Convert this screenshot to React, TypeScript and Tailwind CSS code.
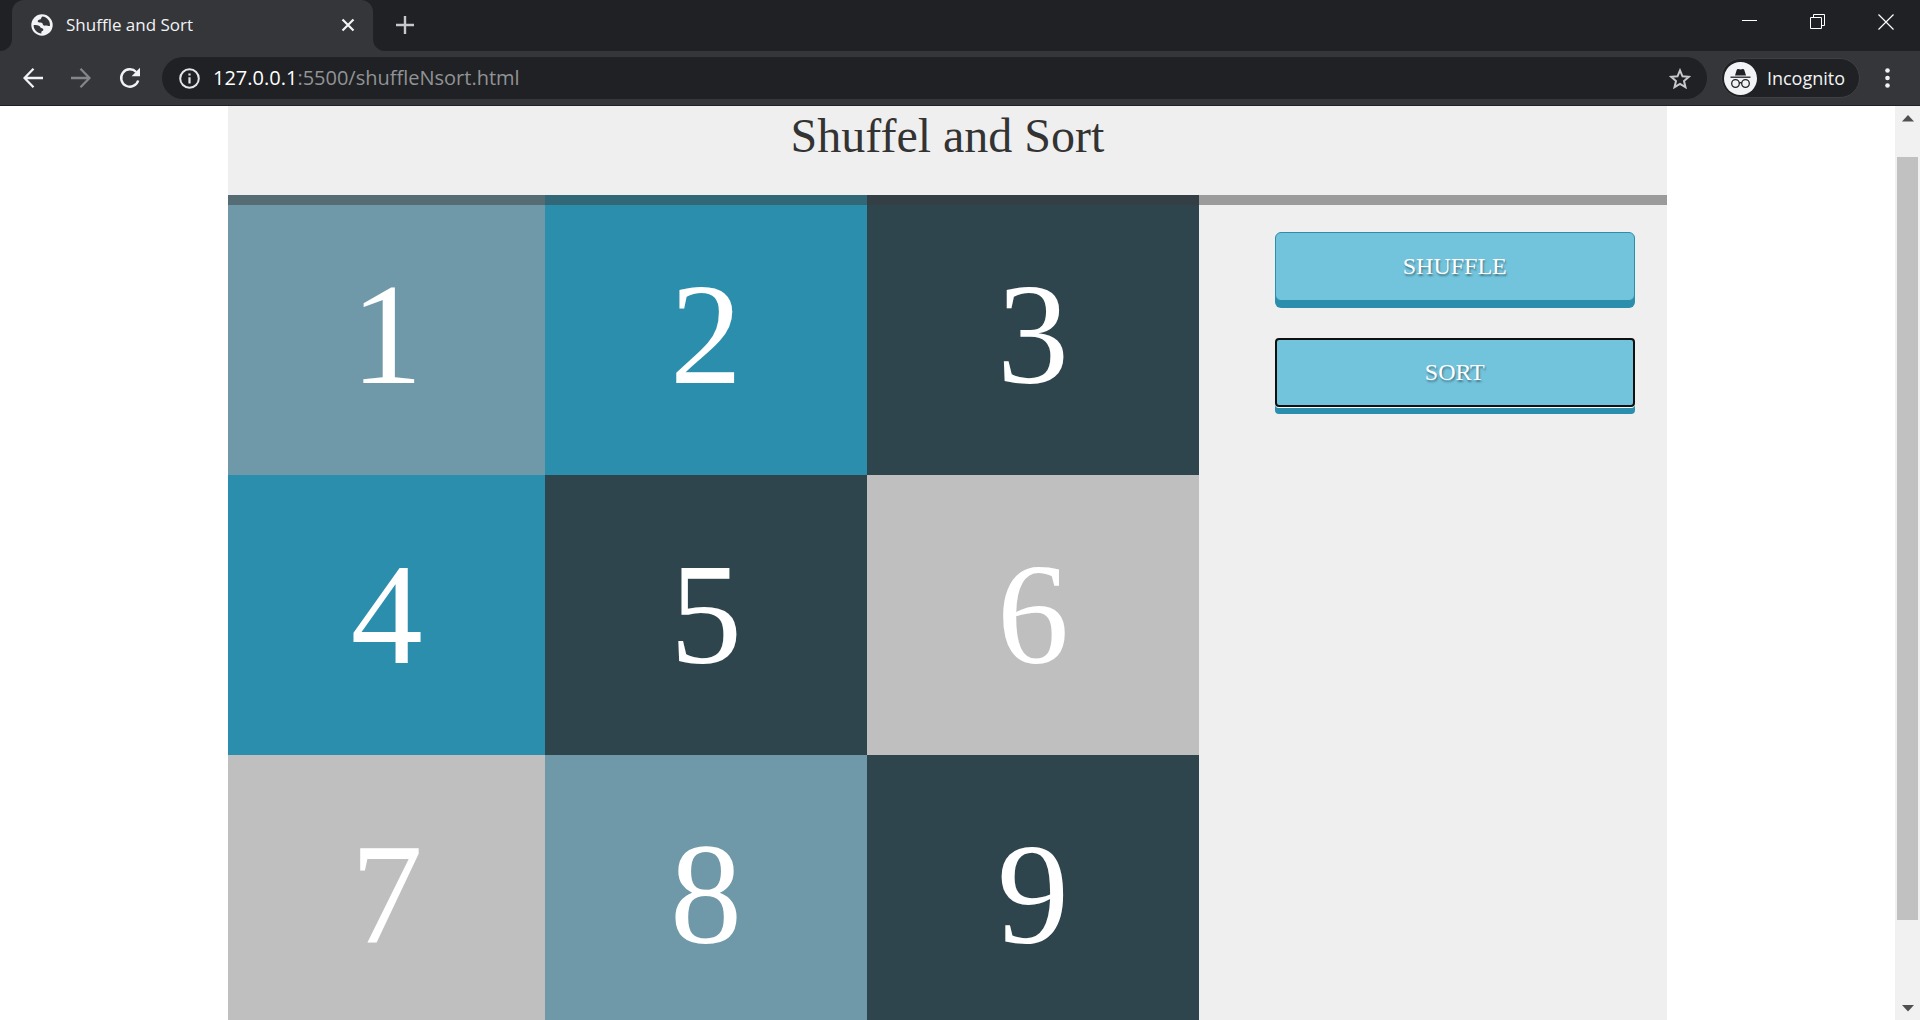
import React from "react";

const tiles = [
  { n: 1, color: "bg-[#6f98a8]" },
  { n: 2, color: "bg-[#2b8ead]" },
  { n: 3, color: "bg-[#2f454e]" },
  { n: 4, color: "bg-[#2b8ead]" },
  { n: 5, color: "bg-[#2f454e]" },
  { n: 6, color: "bg-[#bfbfbf]" },
  { n: 7, color: "bg-[#bfbfbf]" },
  { n: 8, color: "bg-[#6f98a8]" },
  { n: 9, color: "bg-[#2f454e]" },
];

function Globe() {
  return (
    <svg width="22" height="22" viewBox="0 0 22 22" aria-hidden="true">
      <circle cx="11" cy="11" r="10.7" fill="#f1f3f4" />
      <path
        d="M11.3 2.6C9.9 3.4 10.6 4.6 9.6 5.2 8.4 5.8 6.6 5.7 6.7 7.2c.1 1.200 1.500 1.300 2.700 1.300 1.600 0 2.300.8 2.500 2.100.2 1.200 1.500 1.100 2.700 1 1.400-.1 2.500.6 4.300.5C19.600 7.500 16.300 2.900 11.300 2.600z"
        fill="#35363a"
      />
      <path
        d="M2.600 11.200c1.700-.3 3.900-.1 5.300.5 1.400.6 1.100 1.900 2.300 2.200 1.400.3 2.400.7 2.100 2-.3 1.100-1.900 1-2 2.200 0 .5.100.900.200 1.300C6.300 19.300 2.700 15.700 2.600 11.200z"
        fill="#35363a"
      />
    </svg>
  );
}

function TabStrip() {
  return (
    <div className="flex h-[51px] shrink-0 items-stretch bg-[#202124]">
      <div className="w-3 bg-[#35363a]">
        <div className="h-full rounded-br-[12px] bg-[#202124]" />
      </div>
      <div className="flex w-[361px] items-center rounded-t-[12px] bg-[#35363a] pr-[18px] pb-[2px] pl-[19px]">
        <Globe />
        <span className="ml-[13px] flex-1 text-[17px] leading-6 text-[#f1f3f4]">Shuffle and Sort</span>
        <button type="button" aria-label="Close tab" className="flex">
          <svg width="14" height="14" viewBox="0 0 14 14" stroke="#f1f3f4" strokeWidth="2.2" aria-hidden="true">
            <path d="M1.500 1.500l11 11M12.500 1.500l-11 11" />
          </svg>
        </button>
      </div>
      <div className="w-3 bg-[#35363a]">
        <div className="h-full rounded-bl-[12px] bg-[#202124]" />
      </div>
      <button type="button" aria-label="New tab" className="ml-[11px] flex items-center pb-[2px]">
        <svg width="18" height="18" viewBox="0 0 18 18" stroke="#c6c8cb" strokeWidth="2.4" aria-hidden="true">
          <path d="M9 0v18M0 9h18" />
        </svg>
      </button>
      <div className="ml-auto flex h-11 items-center gap-[52px] pr-[26px]">
        <button type="button" aria-label="Minimize" className="flex">
          <svg width="16" height="16" viewBox="0 0 16 16" stroke="#fff" aria-hidden="true">
            <path d="M0 6.500h15" />
          </svg>
        </button>
        <button type="button" aria-label="Restore" className="flex">
          <svg width="16" height="16" viewBox="0 0 16 16" fill="none" stroke="#fff" aria-hidden="true">
            <path d="M.5 3.500h11v11H.5zM3.500 3.500v-3h11v11h-3" />
          </svg>
        </button>
        <button type="button" aria-label="Close window" className="flex">
          <svg width="16" height="16" viewBox="0 0 16 16" stroke="#fff" strokeWidth="1.200" aria-hidden="true">
            <path d="M.5.5l15 15M15.500.5l-15 15" />
          </svg>
        </button>
      </div>
    </div>
  );
}

function Toolbar() {
  return (
    <div className="flex h-[55px] shrink-0 items-center border-b border-[#202124] bg-[#35363a] pr-[30px] pl-[23px]">
      <button type="button" aria-label="Back" className="flex">
        <svg width="20" height="20" viewBox="0 0 20 20" fill="none" stroke="#f1f3f4" strokeWidth="2.300" aria-hidden="true">
          <path d="M20 10H1.500M10.500.800L1.500 10l9 9.200" />
        </svg>
      </button>
      <button type="button" aria-label="Forward" className="ml-7 flex">
        <svg width="20" height="20" viewBox="0 0 20 20" fill="none" stroke="#85868a" strokeWidth="2.300" aria-hidden="true">
          <path d="M0 10h18.500M9.500.800l9 9.200-9 9.200" />
        </svg>
      </button>
      <button type="button" aria-label="Reload" className="ml-7 flex">
        <svg width="22" height="22" viewBox="0 0 22 22" fill="none" aria-hidden="true">
          <path d="M19.200 13.500A8.700 8.700 0 1 1 17.200 5" stroke="#f1f3f4" strokeWidth="2.400" />
          <path d="M21 .8v8.400h-8.400z" fill="#f1f3f4" />
        </svg>
      </button>
      <div className="ml-[21px] flex h-[42px] flex-1 items-center rounded-full bg-[#202124] pr-4 pl-[17px]">
        <svg width="21" height="21" viewBox="0 0 21 21" fill="none" aria-hidden="true">
          <circle cx="10.500" cy="10.500" r="9.300" stroke="#e3e5e8" strokeWidth="2" />
          <path d="M10.500 9.200v6.300M10.500 5.400v2.200" stroke="#e3e5e8" strokeWidth="2.200" />
        </svg>
        <div className="ml-[13px] flex-1 text-[20px] leading-7 text-[#919396]">
          <span className="text-white">127.0.0.1</span>:5500/shuffleNsort.html
        </div>
        <button type="button" aria-label="Bookmark this page" className="flex">
          <svg width="22" height="21" viewBox="0 0 22 21" fill="none" stroke="#c6c8cb" strokeWidth="2" aria-hidden="true">
            <path d="M11 2.400l2.500 5.900 6.400.5-4.900 4.200 1.500 6.200L11 15.900l-5.500 3.300L7 13 2.100 8.800l6.400-.5z" />
          </svg>
        </button>
      </div>
      <button
        type="button"
        className="ml-[14px] flex h-10 items-center rounded-full border border-[#3f4043] bg-[#202124] pr-[14px] pl-[2px] text-[#f1f3f4]"
      >
        <svg width="33" height="33" viewBox="0 0 33 33" fill="none" aria-hidden="true">
          <circle cx="16.500" cy="16.500" r="16.500" fill="#f1f3f4" />
          <path d="M11 13.500l1.700-5.600c.3-.8.900-1.100 1.600-.9l2.200.6 2.200-.6c.7-.2 1.300.1 1.600.9l1.700 5.600z" fill="#202124" />
          <path d="M6.500 15.200h20" stroke="#202124" strokeWidth="1.300" />
          <g stroke="#202124" strokeWidth="1.300">
            <circle cx="11.500" cy="21.500" r="3.800" />
            <circle cx="21.500" cy="21.500" r="3.800" />
            <path d="M15.300 21.200c.7-.6 1.700-.6 2.400 0" />
          </g>
        </svg>
        <span className="ml-[10px] text-[18px] leading-6">Incognito</span>
      </button>
      <button type="button" aria-label="Menu" className="ml-[25px] flex">
        <svg width="5" height="20" viewBox="0 0 5 20" fill="#f1f3f4" aria-hidden="true">
          <circle cx="2.500" cy="2.500" r="2.300" />
          <circle cx="2.500" cy="10" r="2.300" />
          <circle cx="2.500" cy="17.500" r="2.300" />
        </svg>
      </button>
    </div>
  );
}

function Scrollbar() {
  return (
    <div className="flex w-[25px] shrink-0 flex-col items-center bg-[#f1f1f1] pt-[9px] pb-2" aria-hidden="true">
      <svg width="12" height="7" viewBox="0 0 12 7" fill="#505050" className="shrink-0">
        <path d="M6 0l6 6.500H0z" />
      </svg>
      <div className="mt-[35px] flex min-h-0 w-full flex-1 flex-col px-[2px]">
        <div className="grow-[763] bg-[#c1c1c1]" />
        <div className="grow-[85]" />
      </div>
      <svg width="12" height="7" viewBox="0 0 12 7" fill="#505050" className="shrink-0">
        <path d="M0 0h12L6 6.500z" />
      </svg>
    </div>
  );
}

export default function App() {
  return (
    <div className="flex h-screen flex-col overflow-hidden bg-white font-['Open_Sans',sans-serif]">
      <TabStrip />
      <Toolbar />
      <div className="flex min-h-0 flex-1">
        <main className="min-w-0 flex-1 overflow-hidden font-['Liberation_Serif',serif]">
          <div className="mx-auto w-[75.9%] bg-[#efefef]">
            <header className="relative pt-[6px] pb-[35px] shadow-[0_10px_0_rgba(57,57,57,0.46)]">
              <h1 className="text-center text-[48px] leading-[48px] text-[#333333]">Shuffel and Sort</h1>
            </header>
            <div className="grid grid-cols-[971fr_468fr]">
              <div className="grid grid-cols-[317fr_322fr_332fr]">
                {tiles.map((t) => (
                  <div
                    key={t.n}
                    className={`flex h-[280px] items-center justify-center text-[144px] leading-none text-white ${t.color}`}
                  >
                    {t.n}
                  </div>
                ))}
              </div>
              <div className="flex flex-col gap-[37px] pt-[37px] pr-8 pl-[76px]">
                <button
                  type="button"
                  className="h-[69px] rounded-[6px] border border-[#2b8ead] bg-[#72c3dc] pb-[2px] text-[24px] text-white shadow-[0_7px_0_#2b8ead] [text-shadow:1px_2px_2px_rgba(0,0,0,0.4)]"
                >
                  SHUFFLE
                </button>
                <button
                  type="button"
                  className="h-[69px] rounded-[4px] border-2 border-[#101010] bg-[#72c3dc] pb-[2px] text-[24px] text-white shadow-[0_1px_0_#ffffff,0_7px_0_#2b8ead] [text-shadow:1px_2px_2px_rgba(0,0,0,0.4)]"
                >
                  SORT
                </button>
              </div>
            </div>
          </div>
        </main>
        <Scrollbar />
      </div>
    </div>
  );
}
